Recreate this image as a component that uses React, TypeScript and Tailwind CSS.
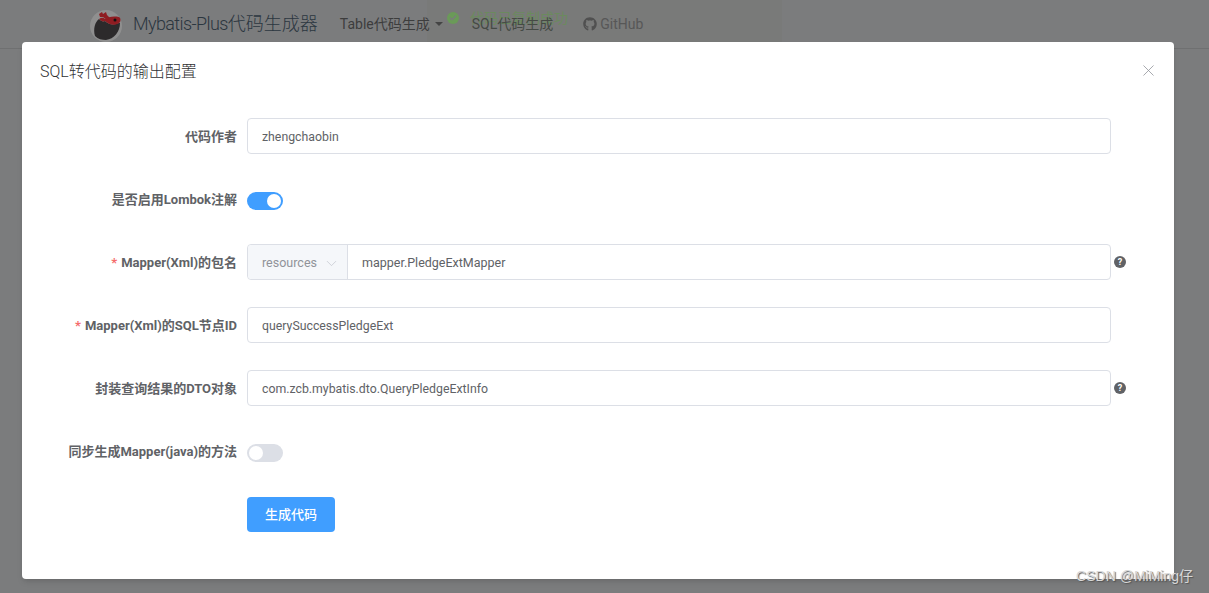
import { Check, ChevronDown, X } from 'lucide-react';
import { FaGithub } from 'react-icons/fa';

function Logo() {
  return (
    <svg width="36" height="36" viewBox="0 0 36 36" className="shrink-0">
      <circle cx="18" cy="20" r="16" fill="#8f8f8f" />
      <path d="M7 30c-2-7 0-14 4-17 2 2 4 3 6 2 3 3 7 4 11 3 1-1 3-1 4-1 0 9-6 16-14 17-4 0-8-1-11-4z" fill="#2c2a2b" />
      <path d="M11 13c2-1 4-2 6 0 3-2 8-3 14-2 2 1 2 5 0 6-4 3-10 2-14-2-2 1-4 0-6-2z" fill="#8f1d22" />
      <path d="M11 8l3-2 1 2 3-2 1 3 3 3-3 2-4-3-3 0z" fill="#8f1d22" />
      <circle cx="27" cy="14" r="1.5" fill="#111" />
    </svg>
  );
}

function HelpIcon() {
  return (
    <span className="ml-[3px] flex h-3 w-3 items-center justify-center rounded-full bg-[#606266] text-[9px] leading-none font-bold text-white">
      ?
    </span>
  );
}

function Label({ text, required }: { text: string; required?: boolean }) {
  return (
    <label className="h-9 w-[225px] shrink-0 pr-2.5 text-right text-[13px] leading-[37px] font-bold text-[#606266]">
      {required && <span className="mr-1 text-[#f56c6c]">*</span>}
      {text}
    </label>
  );
}

function TextInput({ value }: { value: string }) {
  return (
    <div className="flex h-9 w-[864px] items-center rounded border border-[#dcdfe6] bg-white px-3.5 pt-[2px] text-[12.3px] text-[#606266]">
      {value}
    </div>
  );
}

function Toggle({ on }: { on?: boolean }) {
  return (
    <div className="flex h-9 items-center pt-1">
      <div className={`flex h-[18px] w-9 items-center rounded-full p-0.5 ${on ? 'justify-end bg-[#409eff]' : 'justify-start bg-[#dcdfe6]'}`}>
        <div className="h-3.5 w-3.5 rounded-full bg-white" />
      </div>
    </div>
  );
}

export default function App() {
  return (
    <div className="relative h-[593px] w-[1209px] overflow-hidden bg-[#7b7c7d] font-['Roboto','Noto_Sans_CJK_SC',sans-serif]">
      {/* copied toast, lies over the nav */}
      <div className="absolute top-0 left-[427px] flex h-[42px] w-[355px] bg-[#797a79] pt-[12px] pl-5">
        <span className="flex h-3 w-3 items-center justify-center rounded-full bg-[#6a9a58]">
          <Check className="h-2 w-2 text-[#7b7c7d]" strokeWidth={4} />
        </span>
        <span className="ml-[11px] -mt-[2px] text-sm leading-4 text-[#6b8a5e]">代码已复制成功</span>
      </div>

      {/* page behind the dialog */}
      <header className="relative flex h-[49px] items-center border-b border-[#6f7071] pl-[88px]">
        <Logo />
        <span className="ml-[9px] text-lg font-light text-[#2b3640]">
          <span className="tracking-[-0.6px]">Mybatis-Plus</span>代码生成器
        </span>
        <span className="ml-[22px] text-sm text-[#3d3d3d]">Table代码生成</span>
        <span className="ml-[5px] h-0 w-0 border-x-4 border-t-4 border-x-transparent border-t-[#444]" />
        <span className="ml-[29px] text-sm text-[#454a45]">SQL代码生成</span>
        <FaGithub className="ml-[30px] h-3.5 w-3.5 text-[#505050]" />
        <span className="ml-[3px] text-sm text-[#575757]">GitHub</span>
      </header>

      {/* dialog */}
      <div className="absolute top-[42px] left-[22px] h-[537px] w-[1152px] rounded-sm bg-white shadow-md">
        <div className="flex h-10 items-start justify-between pt-[19px] pr-[16px] pl-[18px]">
          <h2 className="text-base leading-[21px] font-light text-[#303133]">SQL转代码的输出配置</h2>
          <X className="h-[19px] w-[19px] text-[#909399]" strokeWidth={1} />
        </div>
        <div className="flex flex-col gap-[27px] pt-[36px]">
          <div className="flex">
            <Label text="代码作者" />
            <TextInput value="zhengchaobin" />
          </div>
          <div className="flex">
            <Label text="是否启用Lombok注解" />
            <Toggle on />
          </div>
          <div className="flex items-center">
            <Label text="Mapper(Xml)的包名" required />
            <div className="flex h-9 w-[864px] rounded border border-[#dcdfe6] bg-white text-[12.5px]">
              <div className="flex w-[100px] shrink-0 items-center gap-[6px] rounded-l border-r border-[#dcdfe6] bg-[#f5f7fa] pt-[2px] pl-[14px] text-[#909399]">
                resources
                <ChevronDown className="h-[17px] w-[17px] shrink-0 text-[#c0c4cc]" strokeWidth={1} />
              </div>
              <div className="flex items-center px-3.5 pt-[2px] text-[#606266]">mapper.PledgeExtMapper</div>
            </div>
            <HelpIcon />
          </div>
          <div className="flex">
            <Label text="Mapper(Xml)的SQL节点ID" required />
            <TextInput value="querySuccessPledgeExt" />
          </div>
          <div className="flex items-center">
            <Label text="封装查询结果的DTO对象" />
            <TextInput value="com.zcb.mybatis.dto.QueryPledgeExtInfo" />
            <HelpIcon />
          </div>
          <div className="flex">
            <Label text="同步生成Mapper(java)的方法" />
            <Toggle />
          </div>
          <div className="flex pt-px">
            <div className="w-[225px] shrink-0" />
            <button className="h-[35px] w-[88px] rounded bg-[#409eff] text-[13px] font-medium text-white">生成代码</button>
          </div>
        </div>
      </div>

      {/* watermark */}
      <span className="absolute top-[566px] right-4 font-['Liberation_Sans','Noto_Sans_CJK_SC',sans-serif] text-sm text-[#d8d8d8] [text-shadow:1px_1px_1px_#555]">CSDN @MiMing仔</span>
    </div>
  );
}
